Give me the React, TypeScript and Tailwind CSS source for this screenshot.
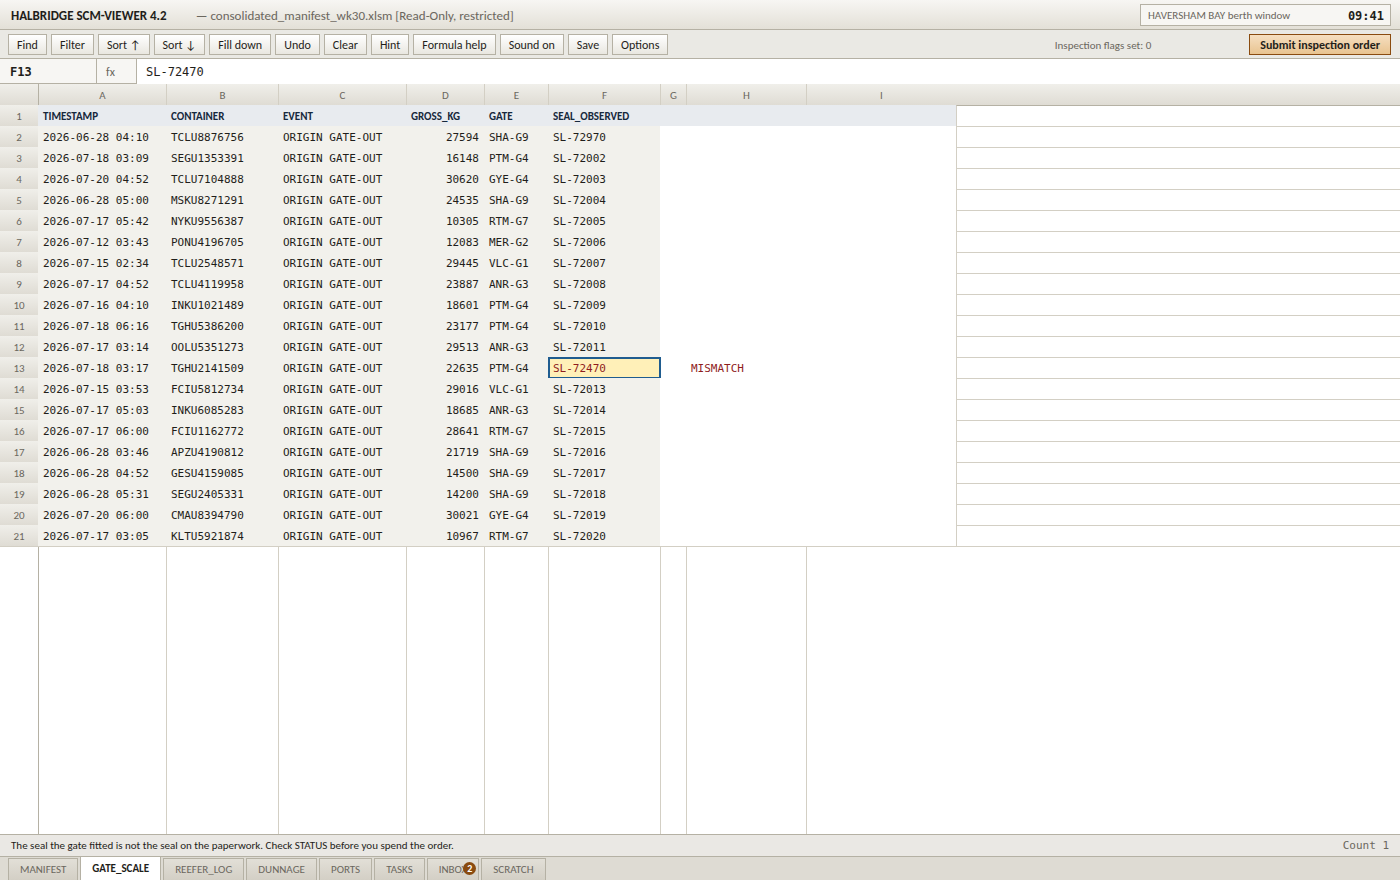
import React, { useState } from "react";
import clsx from "clsx";

interface GateRow {
  timestamp: string;
  container: string;
  gross: number;
  gate: string;
  seal: string;
  flag?: string;
}

const rows: GateRow[] = [
  { timestamp: "2026-06-28 04:10", container: "TCLU8876756", gross: 27594, gate: "SHA-G9", seal: "SL-72970" },
  { timestamp: "2026-07-18 03:09", container: "SEGU1353391", gross: 16148, gate: "PTM-G4", seal: "SL-72002" },
  { timestamp: "2026-07-20 04:52", container: "TCLU7104888", gross: 30620, gate: "GYE-G4", seal: "SL-72003" },
  { timestamp: "2026-06-28 05:00", container: "MSKU8271291", gross: 24535, gate: "SHA-G9", seal: "SL-72004" },
  { timestamp: "2026-07-17 05:42", container: "NYKU9556387", gross: 10305, gate: "RTM-G7", seal: "SL-72005" },
  { timestamp: "2026-07-12 03:43", container: "PONU4196705", gross: 12083, gate: "MER-G2", seal: "SL-72006" },
  { timestamp: "2026-07-15 02:34", container: "TCLU2548571", gross: 29445, gate: "VLC-G1", seal: "SL-72007" },
  { timestamp: "2026-07-17 04:52", container: "TCLU4119958", gross: 23887, gate: "ANR-G3", seal: "SL-72008" },
  { timestamp: "2026-07-16 04:10", container: "INKU1021489", gross: 18601, gate: "PTM-G4", seal: "SL-72009" },
  { timestamp: "2026-07-18 06:16", container: "TGHU5386200", gross: 23177, gate: "PTM-G4", seal: "SL-72010" },
  { timestamp: "2026-07-17 03:14", container: "OOLU5351273", gross: 29513, gate: "ANR-G3", seal: "SL-72011" },
  { timestamp: "2026-07-18 03:17", container: "TGHU2141509", gross: 22635, gate: "PTM-G4", seal: "SL-72470", flag: "MISMATCH" },
  { timestamp: "2026-07-15 03:53", container: "FCIU5812734", gross: 29016, gate: "VLC-G1", seal: "SL-72013" },
  { timestamp: "2026-07-17 05:03", container: "INKU6085283", gross: 18685, gate: "ANR-G3", seal: "SL-72014" },
  { timestamp: "2026-07-17 06:00", container: "FCIU1162772", gross: 28641, gate: "RTM-G7", seal: "SL-72015" },
  { timestamp: "2026-06-28 03:46", container: "APZU4190812", gross: 21719, gate: "SHA-G9", seal: "SL-72016" },
  { timestamp: "2026-06-28 04:52", container: "GESU4159085", gross: 14500, gate: "SHA-G9", seal: "SL-72017" },
  { timestamp: "2026-06-28 05:31", container: "SEGU2405331", gross: 14200, gate: "SHA-G9", seal: "SL-72018" },
  { timestamp: "2026-07-20 06:00", container: "CMAU8394790", gross: 30021, gate: "GYE-G4", seal: "SL-72019" },
  { timestamp: "2026-07-17 03:05", container: "KLTU5921874", gross: 10967, gate: "RTM-G7", seal: "SL-72020" },
];

const columns = [
  { letter: "A", title: "TIMESTAMP", width: "w-[128px]" },
  { letter: "B", title: "CONTAINER", width: "w-[112px]" },
  { letter: "C", title: "EVENT", width: "w-[128px]" },
  { letter: "D", title: "GROSS_KG", width: "w-[78px]" },
  { letter: "E", title: "GATE", width: "w-[64px]" },
  { letter: "F", title: "SEAL_OBSERVED", width: "w-[112px]" },
  { letter: "G", title: "", width: "w-[26px]" },
  { letter: "H", title: "", width: "w-[120px]" },
  { letter: "I", title: "", width: "w-[150px]" },
];

const tools = [
  "Find",
  "Filter",
  "Sort ↑",
  "Sort ↓",
  "Fill down",
  "Undo",
  "Clear",
  "Hint",
  "Formula help",
  "Sound on",
  "Save",
  "Options",
];

const sheets = [
  "MANIFEST",
  "GATE_SCALE",
  "REEFER_LOG",
  "DUNNAGE",
  "PORTS",
  "TASKS",
  "INBOX",
  "SCRATCH",
];

const sans = "font-['Carlito','Calibri','Lato',sans-serif]";
const mono = "font-['DejaVu_Sans_Mono',monospace]";
const headFill = "bg-linear-to-b from-[#f0efea] to-[#dfdcd4]";
const cell = "px-[5px] pt-0.5 pb-0";
const locked = "bg-[#f2f1ec] px-[5px] pt-0.5 pb-0";

const TitleBar: React.FC = () => (
  <header className="flex h-[30px] shrink-0 items-center border-b border-[#b5b1a4] bg-linear-to-b from-[#f7f6f3] to-[#e3e0d7] pl-[11px] pr-[9px]">
    <h1 className="pt-0.5 text-[13px] font-bold leading-5">
      HALBRIDGE SCM-VIEWER 4.2
    </h1>
    <span className="ml-[29px] pt-0.5 text-[13px] leading-5 text-[#6b675e]">
      — consolidated_manifest_wk30.xlsm [Read-Only, restricted]
    </span>
    <div className="ml-auto flex h-[22px] w-[251px] items-center justify-between border border-[#b5b1a4] bg-[#f7f6f3] pl-[7px] pr-[6px] pt-0.5">
      <span className="text-[11px] leading-4 text-[#6b675e]">
        HAVERSHAM BAY berth window
      </span>
      <time className={clsx(mono, "text-[12px] font-bold leading-4")}>09:41</time>
    </div>
  </header>
);

const Toolbar: React.FC = () => (
  <div className="flex h-[29px] shrink-0 items-center gap-1 border-b border-[#b5b1a4] bg-[#eae9e4] pl-2 pr-[9px]">
    {tools.map((tool) => (
      <button
        key={tool}
        type="button"
        className="h-[21px] border border-[#b5b1a4] bg-linear-to-b from-white to-[#e9e7e0] px-2 pt-0.5 text-[12px] leading-[17px]"
      >
        {tool}
      </button>
    ))}
    <span className="ml-auto mr-[94px] pt-1 text-[11px] leading-4 text-[#6b675e]">
      Inspection flags set: 0
    </span>
    <button
      type="button"
      className="h-[21px] border border-[#8a4b0f] bg-linear-to-b from-[#f6dfc0] to-[#e8c390] px-[10px] pt-0.5 text-[12px] font-bold leading-[17px]"
    >
      Submit inspection order
    </button>
  </div>
);

const FormulaBar: React.FC = () => (
  <div className="flex h-[25px] shrink-0 bg-white">
    <div
      className={clsx(
        mono,
        "flex w-[97px] items-center border-b border-r border-[#b5b1a4] bg-[#f7f6f3] pl-[10px] pt-0.5 text-[12px] font-bold"
      )}
    >
      F13
    </div>
    <label
      htmlFor="formula"
      className="flex w-[40px] items-center border-b border-r border-[#b5b1a4] bg-[#f7f6f3] pl-[9px] pt-0.5 text-[12px] text-[#6b675e]"
    >
      fx
    </label>
    <input
      id="formula"
      type="text"
      readOnly
      value="SL-72470"
      className={clsx(mono, "min-w-0 flex-1 px-[9px] text-[12px] outline-none")}
    />
  </div>
);

const RowNumber: React.FC<{ n: number }> = ({ n }) => (
  <th
    className={clsx(
      headFill,
      sans,
      "px-0 pt-0.5 pb-0 text-center text-[11px] font-normal text-[#6b675e]"
    )}
  >
    {n}
  </th>
);

const Sheet: React.FC = () => (
  <main className="flex min-h-0 flex-1 flex-col bg-white">
    <table className="w-full table-fixed border-separate border-spacing-0">
      <colgroup>
        <col className="w-[38px]" />
        {columns.map((col) => (
          <col key={col.letter} className={col.width} />
        ))}
        <col />
      </colgroup>
      <thead>
        <tr className={clsx(headFill, "h-[21px] text-[11px] text-[#6b675e]")}>
          <td />
          {columns.map((col) => (
            <th
              key={col.letter}
              className={clsx(
                "border-l px-0 pt-0.5 pb-0 text-center font-normal leading-4",
                col.letter === "A" ? "border-[#b5b1a4]" : "border-[#d3cfc4]"
              )}
            >
              {col.letter}
            </th>
          ))}
          <td />
        </tr>
      </thead>
      <tbody className={clsx(mono, "text-[11px] leading-4")}>
        <tr className="h-[21px]">
          <RowNumber n={1} />
          {columns.map((col) => (
            <td
              key={col.letter}
              className={clsx(cell, sans, "bg-[#e8ebef] font-bold text-[#16283c]")}
            >
              {col.title}
            </td>
          ))}
          <td className="border-l border-t border-l-[#d3cfc4] border-t-[#b5b1a4]" />
        </tr>
        {rows.map((row, i) => (
          <tr key={row.container} className="h-[21px]">
            <RowNumber n={i + 2} />
            <td className={locked}>{row.timestamp}</td>
            <td className={locked}>{row.container}</td>
            <td className={locked}>ORIGIN GATE-OUT</td>
            <td className={clsx(locked, "text-right")}>{row.gross}</td>
            <td className={locked}>{row.gate}</td>
            {row.flag ? (
              <td className={clsx(cell, "relative bg-[#fff0b8] text-[#8f1d1d]")}>
                {row.seal}
                {/* selection ring runs over the next grid line */}
                <span className="pointer-events-none absolute inset-y-0 left-0 -right-px border-2 border-b border-[#1f5c8f]" />
              </td>
            ) : (
              <td className={locked}>{row.seal}</td>
            )}
            <td />
            <td className={clsx(cell, "text-[#8f1d1d]")}>{row.flag}</td>
            <td />
            <td className="border-l border-t border-[#d3cfc4]" />
          </tr>
        ))}
      </tbody>
    </table>
    <div className="flex flex-1 border-t border-[#d3cfc4]">
      <div className="w-[38px]" />
      {columns.map((col) => (
        <div
          key={col.letter}
          className={clsx(
            col.width,
            "border-l",
            col.letter === "A" ? "border-[#b5b1a4]" : "border-[#d3cfc4]"
          )}
        />
      ))}
    </div>
  </main>
);

const StatusBar: React.FC = () => (
  <div className="flex h-[23px] shrink-0 items-center justify-between border-y border-[#b5b1a4] bg-[#eae8e4] px-[11px] text-[11px] leading-4">
    <span>
      The seal the gate fitted is not the seal on the paperwork. Check STATUS
      before you spend the order.
    </span>
    <span className={clsx(mono, "text-[#6b675e]")}>Count 1</span>
  </div>
);

const SheetTabs: React.FC = () => {
  const [active, setActive] = useState("GATE_SCALE");

  return (
    <nav className="flex h-[23px] shrink-0 items-end gap-0.5 bg-[#dedbd3] pl-2">
      {sheets.map((sheet) => (
        <button
          key={sheet}
          type="button"
          onClick={() => setActive(sheet)}
          className={clsx(
            "relative border-x border-[#b5b1a4] px-[11px] text-[11px] leading-4",
            sheet === active
              ? "h-[23px] bg-white font-bold"
              : "h-[22px] border-t bg-linear-to-b from-[#e2dfd7] to-[#d3cfc5] text-[#6b675e]"
          )}
        >
          {sheet}
          {sheet === "INBOX" && (
            <span className="absolute right-0.5 top-[3px] flex size-[13px] items-center justify-center rounded-full bg-[#8a4b0f] text-[10px] font-bold leading-3 text-white">
              2
            </span>
          )}
        </button>
      ))}
    </nav>
  );
};

const App: React.FC = () => (
  <div
    className={clsx(
      sans,
      "flex h-screen min-h-[620px] flex-col overflow-hidden bg-white text-[#1f1e1a]"
    )}
  >
    <TitleBar />
    <Toolbar />
    <FormulaBar />
    <Sheet />
    <StatusBar />
    <SheetTabs />
  </div>
);

export default App;
